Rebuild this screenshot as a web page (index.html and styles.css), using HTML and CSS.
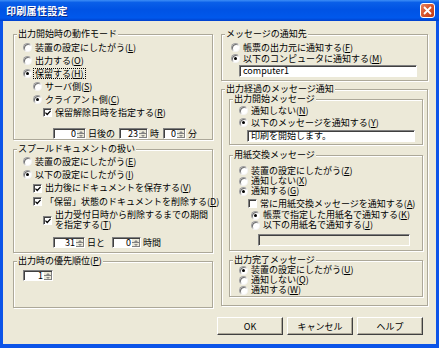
FILE: index.html
```html
<!DOCTYPE html>
<html lang="ja">

<head>
    <meta charset="UTF-8">
    <meta name="viewport" content="width=device-width, initial-scale=1.0">
    <title>印刷属性設定</title>
    <link rel="stylesheet" href="styles.css">
</head>

<body>
    <div class="window">
        <div class="titlebar">
            <span class="title">印刷属性設定</span>
            <span class="close"><svg width="9" height="9" viewBox="0 0 9 9"><path d="M1 1L8 8M8 1L1 8" stroke="#fff" stroke-width="1.8" /></svg></span>
        </div>

        <div class="frame">
            <div class="columns">
                <!-- left column -->
                <div class="col">
                    <fieldset class="group g-mode">
                        <legend>出力開始時の動作モード</legend>
                        <div class="row"><span class="radio"></span>装置の設定にしたがう(<u>L</u>)</div>
                        <div class="row"><span class="radio"></span>出力する(<u>O</u>)</div>
                        <div class="row"><span class="radio on"></span><span class="focus">保留する(<u>H</u>)</span></div>
                        <div class="row in1"><span class="radio"></span>サーバ側(<u>S</u>)</div>
                        <div class="row in1"><span class="radio on"></span>クライアント側(<u>C</u>)</div>
                        <div class="row in2"><span class="check on"><svg width="7" height="7" viewBox="0 0 7 7"><path d="M0.5 3L2.6 5.2L6.5 1" fill="none" stroke="#000" stroke-width="1.5" /></svg></span>保留解除日時を指定する(<u>R</u>)</div>
                        <div class="spinrow in3">
                            <span class="spin w33"><span class="val">0</span><span class="updown"><i></i><i class="down"></i></span></span>
                            <span class="unit">日後の</span>
                            <span class="spin w29"><span class="val">23</span><span class="updown"><i></i><i class="down"></i></span></span>
                            <span class="unit">時</span>
                            <span class="spin w23"><span class="val">0</span><span class="updown"><i></i><i class="down"></i></span></span>
                            <span class="unit">分</span>
                        </div>
                    </fieldset>

                    <fieldset class="group g-spool">
                        <legend>スプールドキュメントの扱い</legend>
                        <div class="row"><span class="radio"></span>装置の設定にしたがう(<u>E</u>)</div>
                        <div class="row"><span class="radio on"></span>以下の設定にしたがう(<u>I</u>)</div>
                        <div class="row r14 in1"><span class="check on"><svg width="7" height="7" viewBox="0 0 7 7"><path d="M0.5 3L2.6 5.2L6.5 1" fill="none" stroke="#000" stroke-width="1.5" /></svg></span>出力後にドキュメントを保存する(<u>V</u>)</div>
                        <div class="row in1"><span class="check on"><svg width="7" height="7" viewBox="0 0 7 7"><path d="M0.5 3L2.6 5.2L6.5 1" fill="none" stroke="#000" stroke-width="1.5" /></svg></span>「保留」状態のドキュメントを削除する(<u>D</u>)</div>
                        <div class="row multi in2"><span class="check on"><svg width="7" height="7" viewBox="0 0 7 7"><path d="M0.5 3L2.6 5.2L6.5 1" fill="none" stroke="#000" stroke-width="1.5" /></svg></span><span class="lines"><span>出力受付日時から削除するまでの期間</span><span>を指定する(<u>T</u>)</span></span></div>
                        <div class="spinrow in3">
                            <span class="spin w32"><span class="val">31</span><span class="updown"><i></i><i class="down"></i></span></span>
                            <span class="unit wide">日と</span>
                            <span class="spin w29"><span class="val">0</span><span class="updown"><i></i><i class="down"></i></span></span>
                            <span class="unit">時間</span>
                        </div>
                    </fieldset>

                    <fieldset class="group g-prio">
                        <legend>出力時の優先順位(<u>P</u>)</legend>
                        <div class="spinrow">
                            <span class="spin w30"><span class="val">1</span><span class="updown"><i></i><i class="down"></i></span></span>
                        </div>
                    </fieldset>
                </div>

                <!-- right column -->
                <div class="col">
                    <fieldset class="group g-dest">
                        <legend>メッセージの通知先</legend>
                        <div class="row r11"><span class="radio"></span>帳票の出力元に通知する(<u>F</u>)</div>
                        <div class="row r11"><span class="radio on"></span>以下のコンピュータに通知する(<u>M</u>)</div>
                        <div class="textbox dest-box">computer1</div>
                    </fieldset>

                    <fieldset class="group g-progress">
                        <legend>出力経過のメッセージ通知</legend>

                        <fieldset class="group g-start">
                            <legend>出力開始メッセージ</legend>
                            <div class="row r11"><span class="radio"></span>通知しない(<u>N</u>)</div>
                            <div class="row r11 gap1"><span class="radio on"></span>以下のメッセージを通知する(<u>Y</u>)</div>
                            <div class="textbox start-box">印刷を開始します。</div>
                        </fieldset>

                        <fieldset class="group g-paper">
                            <legend>用紙交換メッセージ</legend>
                            <div class="row r11"><span class="radio"></span>装置の設定にしたがう(<u>Z</u>)</div>
                            <div class="row r10"><span class="radio"></span>通知しない(<u>X</u>)</div>
                            <div class="row r10"><span class="radio on"></span>通知する(<u>G</u>)</div>
                            <div class="row r13 paper-check"><span class="check"></span>常に用紙交換メッセージを通知する(<u>A</u>)</div>
                            <div class="row r10 paper-sub"><span class="radio on"></span>帳票で指定した用紙名で通知する(<u>K</u>)</div>
                            <div class="row r10 paper-sub"><span class="radio"></span>以下の用紙名で通知する(<u>J</u>)</div>
                            <div class="textbox disabled paper-box"></div>
                        </fieldset>

                        <fieldset class="group g-end">
                            <legend>出力完了メッセージ</legend>
                            <div class="row r10"><span class="radio on"></span>装置の設定にしたがう(<u>U</u>)</div>
                            <div class="row r10"><span class="radio"></span>通知しない(<u>Q</u>)</div>
                            <div class="row r10"><span class="radio"></span>通知する(<u>W</u>)</div>
                        </fieldset>
                    </fieldset>
                </div>
            </div>

            <div class="buttons">
                <button type="button">OK</button>
                <button type="button">キャンセル</button>
                <button type="button">ヘルプ</button>
            </div>
        </div>
    </div>
</body>

</html>
```

FILE: styles.css
```css
body {
    margin: 0;
    font-family: "Noto Sans CJK JP", "Noto Sans", sans-serif;
    font-size: 9px;
    line-height: 10px;
    color: #000;
}

.window {
    width: 439px;
    height: 348px;
    display: flex;
    flex-direction: column;
    background: #0c54e8;
}

/* title bar */
.titlebar {
    height: 21px;
    flex-shrink: 0;
    display: flex;
    align-items: center;
    justify-content: space-between;
    padding: 0 4px 0 6px;
    background: linear-gradient(#3d8ef6 0, #0a5fe8 12%, #0053e4 45%, #0058ec 85%, #0040cc 100%);
    color: #fff;
}

.title {
    font-size: 10px;
    font-weight: bold;
    text-shadow: 1px 1px 0 #0a2b8c;
    letter-spacing: 0.3px;
}

.close {
    width: 15px;
    height: 15px;
    box-sizing: border-box;
    border: 1px solid #fff;
    border-radius: 3px;
    background: linear-gradient(135deg, #e9825f 0, #d9572f 45%, #c23a14 100%);
    display: flex;
    align-items: center;
    justify-content: center;
}

/* dialog body */
.frame {
    flex: 1;
    background: #ece9d8;
    margin: 0 3px 4px 3px;
    padding: 8px 8px 0 10px;
}

.columns {
    display: grid;
    grid-template-columns: 200px 207px;
    column-gap: 8px;
    align-items: start;
}

/* group boxes */
.group {
    margin: 0;
    min-width: 0;
    border: 1px solid #aca899;
    box-shadow: inset 1px 1px 0 #fff, 1px 1px 0 #fff;
    padding: 0 4px 0 9px;
}

.group legend {
    line-height: 10px;
    height: 10px;
    padding: 0 1px;
    margin-left: -6px;
    background: #ece9d8;
}

.g-mode {
    padding-top: 2px;
}

.g-spool {
    margin-top: 4px;
    padding-top: 1px;
    padding-bottom: 4px;
}

.g-prio {
    margin-top: 3px;
    padding-top: 4px;
    padding-bottom: 26px;
}

.g-dest {
    padding-top: 3px;
    padding-bottom: 3px;
}

.g-progress {
    margin-top: 3px;
    padding: 0 4px 8px 7px;
}

.g-progress > legend {
    margin-left: -4px;
}

.g-start {
    padding-top: 1px;
    padding-bottom: 2px;
}

.g-paper {
    margin-top: 5px;
    padding-top: 5px;
    padding-bottom: 4px;
}

.g-end {
    margin-top: 4px;
    padding-bottom: 1px;
}

/* option rows */
.row {
    height: 13px;
    display: flex;
    align-items: center;
    white-space: nowrap;
}

.r10 {
    height: 10px;
}

.r11 {
    height: 11px;
}

.r13 {
    height: 13px;
}

.r14 {
    height: 14px;
}

.gap1 {
    margin-top: 1px;
}

.in1 {
    padding-left: 10px;
}

.in2 {
    padding-left: 20px;
}

.in3 {
    padding-left: 30px;
}

.multi {
    height: auto;
    margin-top: 2px;
}

.lines {
    display: flex;
    flex-direction: column;
}

.lines span {
    height: 10px;
}

.paper-check {
    margin-top: 1px;
    padding-left: 9px;
}

.paper-sub {
    padding-left: 12px;
}

u {
    text-decoration: underline;
    text-underline-offset: 1px;
}

.focus {
    outline: 1px dotted #000;
    outline-offset: 0;
    line-height: 9px;
    padding: 0 1px;
    margin-left: -1px;
}

/* radio buttons and checkboxes */
.radio {
    width: 9px;
    height: 9px;
    box-sizing: border-box;
    flex-shrink: 0;
    margin-right: 3px;
    border-radius: 50%;
    border: 1px solid;
    border-color: #a0a0a0 #f4f4f4 #f4f4f4 #a0a0a0;
    box-shadow: inset 1px 1px 0 #707070;
    background: #fff;
    display: flex;
    align-items: center;
    justify-content: center;
}

.radio.on::after {
    content: "";
    width: 3px;
    height: 3px;
    border-radius: 50%;
    background: #000;
}

.check {
    width: 9px;
    height: 9px;
    box-sizing: border-box;
    flex-shrink: 0;
    margin-right: 3px;
    border: 1px solid;
    border-color: #808080 #fff #fff #808080;
    box-shadow: inset 1px 1px 0 #404040;
    background: #fff;
    display: flex;
    align-items: center;
    justify-content: center;
    padding: 1px 0 0 1px;
}

.check svg {
    width: 6px;
    height: 6px;
}

/* spinners */
.spinrow {
    display: flex;
    align-items: center;
    height: 11px;
}

.g-mode .spinrow {
    margin-top: 9px;
}

.g-spool .spinrow {
    margin-top: 7px;
}

.spin {
    height: 11px;
    box-sizing: border-box;
    display: flex;
    border: 1px solid;
    border-color: #808080 #fff #fff #808080;
    box-shadow: inset 1px 1px 0 #404040;
    background: #fff;
}

.w23 {
    width: 23px;
}

.w29 {
    width: 29px;
}

.w30 {
    width: 30px;
}

.w32 {
    width: 32px;
}

.w33 {
    width: 33px;
}

.spin .val {
    flex: 1;
    text-align: right;
    line-height: 9px;
    padding-right: 1px;
}

.updown {
    width: 8px;
    display: flex;
    flex-direction: column;
    margin-top: 1px;
}

.updown i {
    flex: 1;
    background: #ece9d8;
    border-right: 1px solid #808080;
    border-bottom: 1px solid #808080;
    box-sizing: border-box;
    display: flex;
    align-items: center;
    justify-content: center;
}

.updown i::after {
    content: "";
    border-left: 2px solid transparent;
    border-right: 2px solid transparent;
    border-bottom: 2px solid #8a8a8a;
}

.updown i.down::after {
    border-bottom: 0;
    border-top: 2px solid #8a8a8a;
}

.unit {
    margin: 0 4px 0 2px;
}

.unit.wide {
    margin-right: 7px;
}

/* text boxes */
.textbox {
    height: 12px;
    box-sizing: border-box;
    border: 1px solid;
    border-color: #808080 #fff #fff #808080;
    box-shadow: inset 1px 1px 0 #404040;
    background: #fff;
    padding-left: 3px;
    line-height: 10px;
}

.textbox.disabled {
    background: #ece9d8;
}

.dest-box {
    margin: 1px 0 0 8px;
    width: 178px;
}

.start-box {
    margin: 2px 0 0 8px;
    width: 168px;
}

.paper-box {
    margin: 4px 0 0 19px;
    width: 152px;
}

/* buttons */
.buttons {
    display: flex;
    justify-content: flex-end;
    gap: 4px;
    margin-top: 9px;
    padding-right: 5px;
}

button {
    width: 66px;
    height: 18px;
    padding: 0;
    font-family: inherit;
    font-size: 9px;
    color: #000;
    background: #ece9d8;
    border: 1px solid;
    border-color: #fff #404040 #404040 #fff;
    box-shadow: inset -1px -1px 0 #aca899;
}
```
